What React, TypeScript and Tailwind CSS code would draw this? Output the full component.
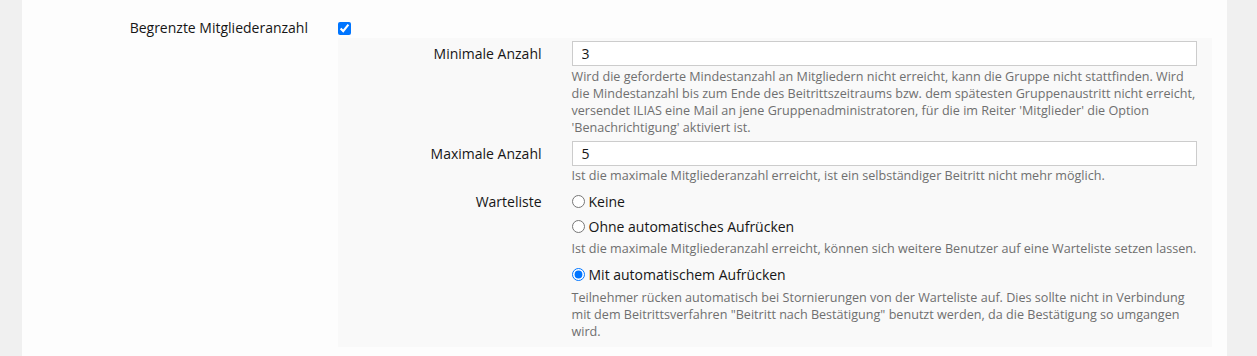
import React from 'react';

function HelpText({ children, className = '' }: { children: React.ReactNode; className?: string }) {
  return <div className={`text-[12.6px] leading-[17.3px] text-[#6f6f6f] ${className}`}>{children}</div>;
}

function Radio({ label, checked = false, className = '' }: { label: string; checked?: boolean; className?: string }) {
  return (
    <label className={`flex h-[24px] items-center gap-[4px] text-[14px] text-[#161616] ${className}`}>
      <input type="radio" name="waitlist" defaultChecked={checked} className="h-[13px] w-[13px]" />
      <span>{label}</span>
    </label>
  );
}

export default function App() {
  return (
    <div
      className="flex h-[356px] w-[1257px] bg-[#f0f0f0]"
      style={{ fontFamily: '"Open Sans", "Noto Sans", sans-serif' }}
    >
      <div className="ml-[22px] flex w-[1205px] bg-[#fdfdfd]">
        <div className="w-[301px] px-[15px] pt-[19px] text-right text-[14px] leading-[18px] text-[#161616]">
          Begrenzte Mitgliederanzahl
        </div>
        <div className="flex-1 px-[15px] pt-[22px]">
          <input type="checkbox" defaultChecked className="block h-[13px] w-[13px]" />
          <div className="mt-[3px] bg-[#f9f9f9] pb-[6px] pt-[3px]">
            {/* Minimale Anzahl */}
            <div className="flex">
              <div className="flex h-[25px] w-[218.5px] items-center justify-end px-[15px] text-[14px] text-[#161616]">
                Minimale Anzahl
              </div>
              <div className="flex-1 px-[15px]">
                <input
                  defaultValue="3"
                  className="block h-[25px] w-full border border-[#cccccc] bg-white px-[9px] text-[14px] text-[#161616] outline-none"
                />
                <HelpText className="mt-[1.5px]">
                  Wird die geforderte Mindestanzahl an Mitgliedern nicht erreicht, kann die Gruppe nicht stattfinden. Wird
                  die Mindestanzahl bis zum Ende des Beitrittszeitraums bzw. dem spätesten Gruppenaustritt nicht erreicht,
                  versendet ILIAS eine Mail an jene Gruppenadministratoren, für die im Reiter 'Mitglieder' die Option
                  'Benachrichtigung' aktiviert ist.
                </HelpText>
              </div>
            </div>
            {/* Maximale Anzahl */}
            <div className="mt-[4.3px] flex">
              <div className="flex h-[25px] w-[218.5px] items-center justify-end px-[15px] text-[14px] text-[#161616]">
                Maximale Anzahl
              </div>
              <div className="flex-1 px-[15px]">
                <input
                  defaultValue="5"
                  className="block h-[25px] w-full border border-[#cccccc] bg-white px-[9px] text-[14px] text-[#161616] outline-none"
                />
                <HelpText className="mt-[1px]">
                  Ist die maximale Mitgliederanzahl erreicht, ist ein selbständiger Beitritt nicht mehr möglich.
                </HelpText>
              </div>
            </div>
            {/* Warteliste */}
            <div className="mt-[5.7px] flex">
              <div className="flex h-[24px] w-[218.5px] items-center justify-end px-[15px] text-[14px] text-[#161616]">
                Warteliste
              </div>
              <div className="flex-1 px-[15px]">
                <Radio label="Keine" />
                <Radio label="Ohne automatisches Aufrücken" className="mt-[1px]" />
                <HelpText className="mt-[1.5px]">
                  Ist die maximale Mitgliederanzahl erreicht, können sich weitere Benutzer auf eine Warteliste setzen lassen.
                </HelpText>
                <Radio label="Mit automatischem Aufrücken" checked className="mt-[5px]" />
                <HelpText className="mt-[2px]">
                  Teilnehmer rücken automatisch bei Stornierungen von der Warteliste auf. Dies sollte nicht in Verbindung
                  mit dem Beitrittsverfahren "Beitritt nach Bestätigung" benutzt werden, da die Bestätigung so umgangen
                  wird.
                </HelpText>
              </div>
            </div>
          </div>
        </div>
      </div>
    </div>
  );
}
